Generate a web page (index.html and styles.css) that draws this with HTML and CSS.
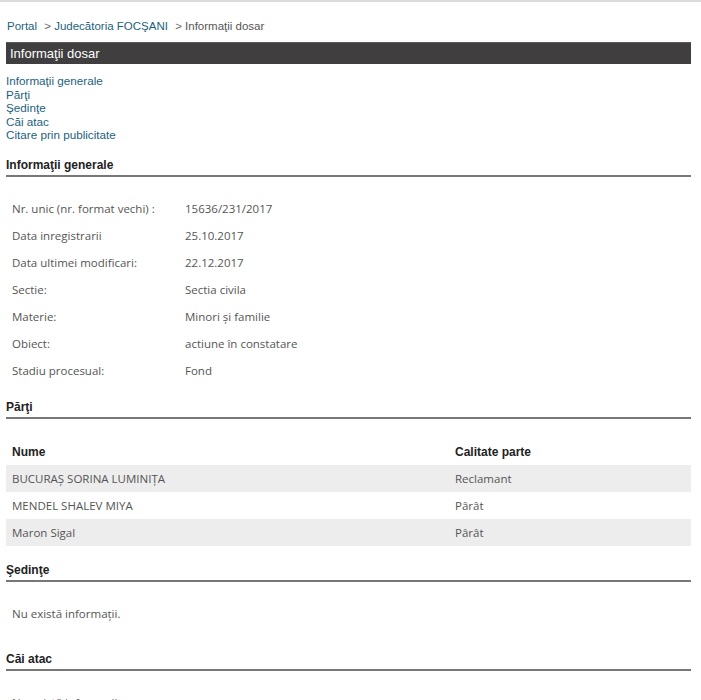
FILE: index.html
```html
<!DOCTYPE html>
<html lang="ro">
<head>
    <meta charset="UTF-8">
    <title>Informaţii dosar</title>
    <link rel="stylesheet" href="styles.css">
</head>
<body>

    <div class="top-line"></div>

    <div class="page">

        <div class="breadcrumb">
            <a href="#">Portal</a>
            <span class="sep">&gt;</span>
            <a href="#">Judecătoria FOCŞANI</a>
            <span class="sep">&gt;</span>
            <span class="current">Informaţii dosar</span>
        </div>

        <div class="title-bar">Informaţii dosar</div>

        <ul class="toc">
            <li><a href="#generale">Informaţii generale</a></li>
            <li><a href="#parti">Părţi</a></li>
            <li><a href="#sedinte">Şedinţe</a></li>
            <li><a href="#cai">Căi atac</a></li>
            <li><a href="#citare">Citare prin publicitate</a></li>
        </ul>

        <h3 class="section-title" id="generale">Informaţii generale</h3>
        <table class="info-table">
            <tr><td class="label">Nr. unic (nr. format vechi) :</td><td>15636/231/2017</td></tr>
            <tr><td class="label">Data inregistrarii</td><td>25.10.2017</td></tr>
            <tr><td class="label">Data ultimei modificari:</td><td>22.12.2017</td></tr>
            <tr><td class="label">Sectie:</td><td>Sectia civila</td></tr>
            <tr><td class="label">Materie:</td><td>Minori și familie</td></tr>
            <tr><td class="label">Obiect:</td><td>actiune în constatare</td></tr>
            <tr><td class="label">Stadiu procesual:</td><td>Fond</td></tr>
        </table>

        <h3 class="section-title" id="parti">Părţi</h3>
        <table class="parti-table">
            <thead>
                <tr><th class="col-name">Nume</th><th>Calitate parte</th></tr>
            </thead>
            <tbody>
                <tr class="odd"><td>BUCURAȘ SORINA LUMINIȚA</td><td>Reclamant</td></tr>
                <tr><td>MENDEL SHALEV MIYA</td><td>Pârât</td></tr>
                <tr class="odd"><td>Maron Sigal</td><td>Pârât</td></tr>
            </tbody>
        </table>

        <h3 class="section-title" id="sedinte">Şedinţe</h3>
        <p class="empty">Nu există informaţii.</p>

        <h3 class="section-title" id="cai">Căi atac</h3>
        <p class="empty">Nu există informaţii.</p>

    </div>

</body>
</html>
```

FILE: styles.css
```css
body {
    margin: 0;
    padding: 0;
    background: white;
    font-family: 'Liberation Sans', Arial, sans-serif;
    font-size: 12px;
    color: #333;
}

a {
    color: #1d5f80;
    text-decoration: none;
}

.top-line {
    height: 2px;
    background: #dcdcdc;
}

.page {
    width: 685px;
    margin-left: 6px;
}

.breadcrumb {
    padding-top: 18px;
    height: 22px;
    padding-left: 1px;
    font-size: 11.5px;
    color: #555;
}

.breadcrumb .sep {
    margin: 0 0 0 4px;
    color: #666;
}

.title-bar {
    height: 21px;
    line-height: 21px;
    padding-left: 4px;
    background: #403e3e;
    border-top: 1px solid #5a5858;
    color: white;
    font-size: 13px;
}

.toc {
    list-style: none;
    margin: 10px 0 0 0;
    padding: 0;
    font-size: 11.7px;
    line-height: 13.5px;
}

.section-title {
    margin: 0;
    padding-bottom: 3px;
    font-size: 12px;
    font-weight: bold;
    color: #222;
    border-bottom: 2px solid #777;
}

#generale {
    margin-top: 16px;
}

.info-table {
    border-collapse: collapse;
    margin: 18px 0 16px 0;
    font-family: 'Open Sans', sans-serif;
    font-size: 11.5px;
    color: #555;
}

.info-table td {
    height: 27px;
    padding: 0 0 0 6px;
}

.info-table .label {
    width: 167px;
}

.parti-table {
    width: 100%;
    border-collapse: collapse;
    margin: 20px 0 17px 0;
    font-family: 'Open Sans', sans-serif;
    font-size: 11.5px;
    color: #555;
}

.parti-table th {
    text-align: left;
    height: 26px;
    padding: 0 0 0 6px;
    font-family: 'Liberation Sans', Arial, sans-serif;
    font-size: 12px;
    font-weight: bold;
    color: #222;
}

.parti-table .col-name {
    width: 437px;
}

.parti-table td {
    height: 27px;
    padding: 0 0 0 6px;
}

.parti-table .odd {
    background: #ededed;
}

.empty {
    margin: 0;
    padding: 24px 0 0 6px;
    height: 46px;
    font-family: 'Open Sans', sans-serif;
    font-size: 11.5px;
    color: #555;
}
```
